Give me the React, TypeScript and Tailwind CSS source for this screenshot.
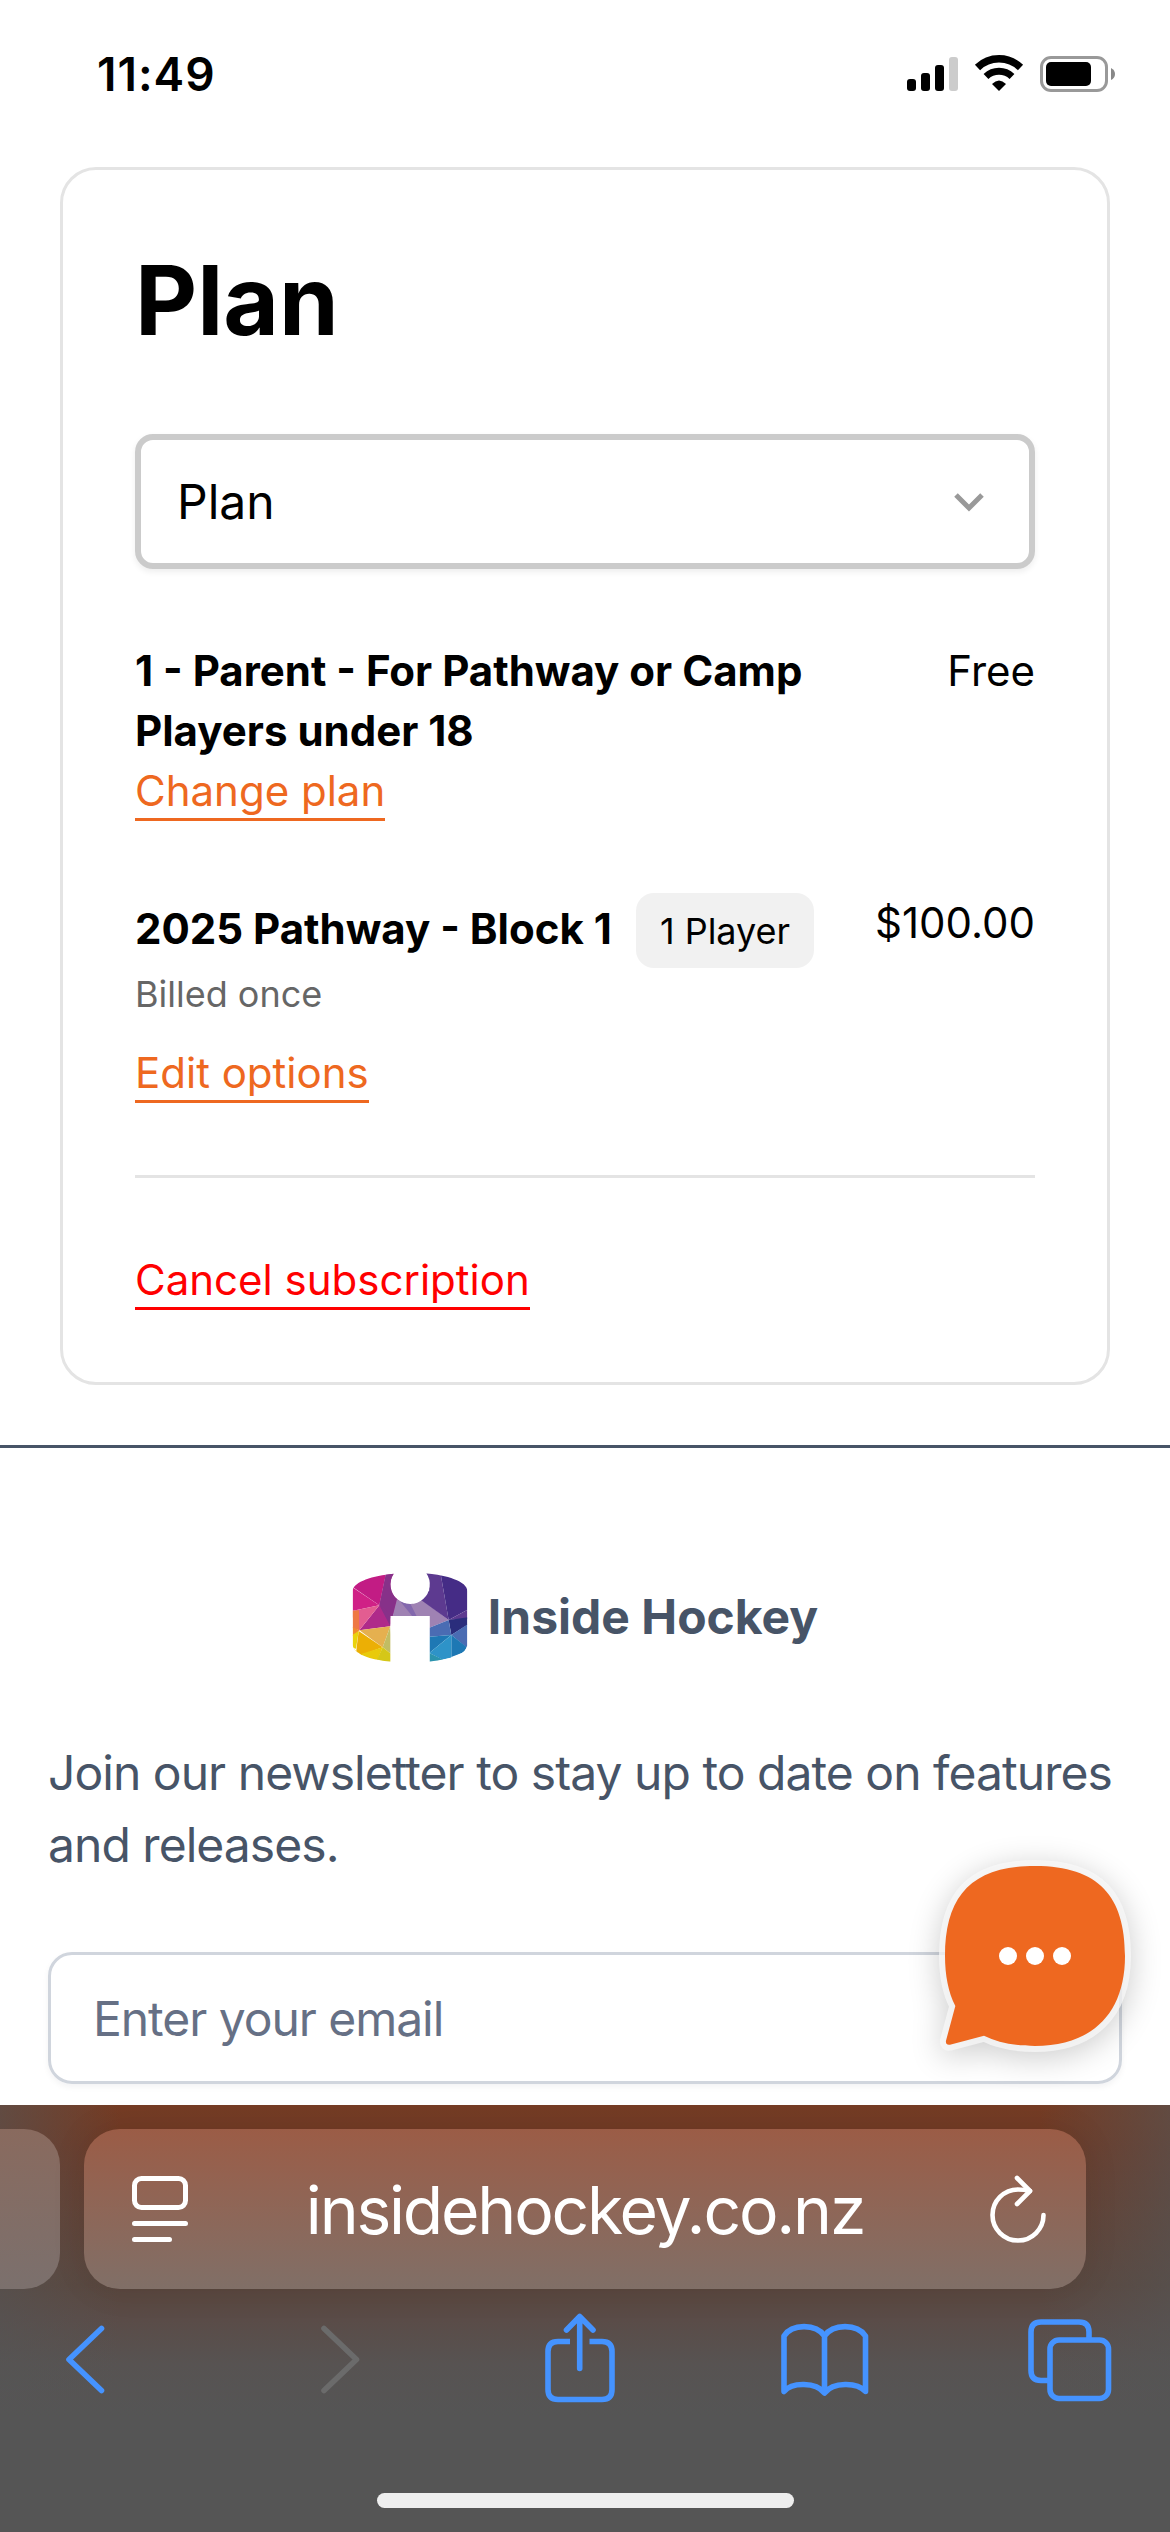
import React from 'react';

const logoFacets = [
  { points: "60,90 172,90 150,195 70,140", fill: "#c21c84" },
  { points: "60,135 150,195 60,214", fill: "#d02186" },
  { points: "172,90 215,90 215,172 190,228 183,258 90,270 150,195", fill: "#af2a8a" },
  { points: "172,90 230,90 240,184 204,172 190,228 150,195", fill: "#873189" },
  { points: "190,226 183,235 183,258 150,195", fill: "#873189" },
  { points: "60,214 150,195 90,270", fill: "#e35d91" },
  { points: "60,212 89,210 90,270 60,260", fill: "#ee7844" },
  { points: "60,255 90,270 76,285 60,290", fill: "#f08a2c" },
  { points: "60,290 88,272 80,325 60,320", fill: "#ead20c" },
  { points: "90,270 183,258 160,321", fill: "#e5b04f" },
  { points: "183,258 190,345 160,321", fill: "#c2bd62" },
  { points: "88,272 160,321 80,350 82,320", fill: "#ecaf05" },
  { points: "70,322 92,342 160,321 145,358 100,362 70,340", fill: "#e9ca0b" },
  { points: "160,321 190,345 190,375 140,365", fill: "#d5c718" },
  { points: "204,172 240,184 275,176 358,239 300,262 300,228 190,228", fill: "#9f82b3" },
  { points: "204,172 240,184 262,228 249,228", fill: "#8368ad" },
  { points: "236,182 275,176 248,190", fill: "#8368ad" },
  { points: "285,90 332,90 358,239 272,177 300,150", fill: "#5d3a90" },
  { points: "332,90 420,90 420,205 358,239", fill: "#452c86" },
  { points: "420,205 420,236 358,239", fill: "#5d3a90" },
  { points: "358,239 420,230 420,250 366,284", fill: "#2a2d7c" },
  { points: "300,262 358,239 366,284 300,289", fill: "#4a6cb3" },
  { points: "366,284 420,248 420,315 410,320", fill: "#4a6cb3" },
  { points: "300,289 366,284 300,338", fill: "#1e78b4" },
  { points: "366,284 412,320 405,335 366,350", fill: "#1e78b4" },
  { points: "300,338 366,284 366,352 340,358", fill: "#2e93c8" },
  { points: "300,338 342,358 300,368", fill: "#2b93ae" },
];

const LogoMark = () => (
  <svg className="h-[90px] w-[116px]" viewBox="68 98 348 270">
    <defs>
      <clipPath id="mark">
        <path d="M193 100 A59 59 0 1 0 291 99 C350 105 414 122 414 153 V315 C411 340 370 356 301 364 V227 H183 V364 C120 358 76 342 70 315 V150 C74 124 130 106 193 100 Z" />
      </clipPath>
    </defs>
    <g clipPath="url(#mark)">
      {logoFacets.map((facet, index) => (
        <polygon key={index} points={facet.points} fill={facet.fill} />
      ))}
    </g>
  </svg>
);

const StatusBar = () => (
  <div className="flex h-[167px] items-start justify-between pl-[97px] pr-[54px] pt-[50px]">
    <span className="text-[46px] leading-[48px] font-semibold tracking-[1px]">11:49</span>
    <svg className="mt-[4px] h-[40px] w-[210px]" viewBox="906 54 210 40">
      <rect x="907" y="79" width="9" height="12" rx="3" />
      <rect x="921" y="73" width="9" height="18" rx="3" />
      <rect x="935" y="65" width="9" height="26" rx="3" />
      <rect x="949" y="57" width="9" height="34" rx="3" fill="#cccccc" />
      <path d="M977.5 67.5 A31 31 0 0 1 1020.500 67.500" fill="none" stroke="#000" strokeWidth="7.500" />
      <path d="M986 76.500 A19 19 0 0 1 1012 76.500" fill="none" stroke="#000" strokeWidth="7" />
      <path d="M999 91 L992 84 Q999 77 1006 84 Z" />
      <rect x="1041.500" y="57.500" width="65" height="33" rx="9.500" fill="none" stroke="#999" strokeWidth="3" />
      <rect x="1046" y="62" width="45" height="24" rx="5" />
      <path d="M1111 68 Q1115 70 1115 74 Q1115 78 1111 80 Z" fill="#888" />
    </svg>
  </div>
);

const PlanCard = () => (
  <section className="mx-[60px] rounded-[36px] border-3 border-[#e4e4e4] px-[72px] pb-[72px] pt-[82px]">
    <h1 className="text-[96px] leading-[96px] font-bold">Plan</h1>
    <div className="mt-[86px] flex h-[135px] items-center justify-between rounded-[18px] border-6 border-[#cbcbcb] pl-[36px] pr-[42px] text-[48px] shadow-[0_3px_6px_rgba(0,0,0,0.07)]">
      <span>Plan</span>
      <svg className="h-[24px] w-[36px]" viewBox="0 0 36 24" fill="none" stroke="#999" strokeWidth="5">
        <path d="M5 5 L18 18 L31 5" />
      </svg>
    </div>

    <div className="mt-[72px] flex justify-between text-[42px] leading-[60px]">
      <div className="w-[700px]">
        <p className="font-bold">1 - Parent - For Pathway or Camp Players under 18</p>
        <a className="border-b-3 border-[#ee6820] pb-[2px] text-[#ee6820]">Change plan</a>
      </div>
      <span>Free</span>
    </div>

    <div className="mt-[72px] flex justify-between text-[42px] leading-[60px]">
      <div>
        <div className="flex h-[75px] items-baseline gap-[24px]">
          <p className="font-bold">2025 Pathway - Block 1</p>
          <span className="rounded-[18px] bg-[#f1f1f1] px-[24px] pt-px text-[36px] leading-[74px]">1 Player</span>
        </div>
        <p className="-mt-px text-[36px] leading-[54px] text-[#666]">Billed once</p>
        <p className="mt-[22px]">
          <a className="border-b-3 border-[#ee6820] pb-[2px] text-[#ee6820]">Edit options</a>
        </p>
      </div>
      <span>$100.00</span>
    </div>

    <hr className="my-[72px] border-t-3 border-[#e4e4e4]" />
    <p className="text-[42px] leading-[60px]">
      <a className="border-b-3 border-[#ff0000] pb-[2px] text-[#ff0000]">Cancel subscription</a>
    </p>
  </section>
);

const Footer = () => (
  <footer className="mt-[60px] border-t-3 border-[#475467] px-[48px] pt-[125px] text-[48px] text-[#475467]">
    <div className="flex h-[90px] items-center justify-center gap-[20px]">
      <LogoMark />
      <span className="mb-[2px] leading-[48px] font-bold">Inside Hockey</span>
    </div>
    <p className="mt-[74px] leading-[72px] tracking-[-0.96px]">Join our newsletter to stay up to date on features and releases.</p>
    <div className="mt-[71px] flex h-[132px] items-center rounded-[24px] border-3 border-[#d0d5dd] px-[42px] pt-[2px] tracking-[-1.05px] text-[#667085] shadow-[0_3px_6px_rgba(16,24,40,0.05)]">
      Enter your email
    </div>
  </footer>
);

const ChatButton = () => (
  <svg className="absolute left-[900px] top-[1830px] h-[270px] w-[270px] overflow-visible" viewBox="0 0 810 810">
    <defs>
      <filter id="soft" x="-30%" y="-30%" width="160%" height="160%">
        <feGaussianBlur stdDeviation="48" />
      </filter>
      <path
        id="bubble"
        d="M405 108 C597 108 675 200 675 378 C675 556 570 648 405 648 C345 648 293 637 252 617 L150 644 Q136 646 138 632 L166 528 C145 488 135 435 135 378 C135 200 213 108 405 108 Z"
      />
    </defs>
    <use href="#bubble" y="18" fill="#000" stroke="#000" strokeWidth="36" opacity="0.2" filter="url(#soft)" />
    <use href="#bubble" fill="none" stroke="#f8f8f8" strokeOpacity="0.75" strokeWidth="36" strokeLinejoin="round" />
    <use href="#bubble" fill="#ee6820" />
    <circle cx="324" cy="378" r="27" fill="#fff" />
    <circle cx="405" cy="378" r="27" fill="#fff" />
    <circle cx="486" cy="378" r="27" fill="#fff" />
  </svg>
);

const BrowserBar = () => (
  <div className="relative h-[427px] shrink-0 bg-[#555] bg-[linear-gradient(90deg,#55555599_0,#55555500_120px,#55555500_1040px,#55555599_1170px),linear-gradient(180deg,#753c24_0,#6f3a26_40px,#5a463d_180px,#5a4c48_215px,#575352_260px,#555555_310px)] pt-[24px]">
    <div className="flex h-[160px] gap-[24px]">
      <div className="w-[60px] rounded-r-[36px] bg-linear-to-b from-[#896a5e] to-[#7b706d]" />
      <div className="flex w-[1002px] items-center justify-between rounded-[36px] bg-linear-to-b from-[#9b5c46] to-[#806f67] pl-[47px] pr-[39px] text-white shadow-[0_0_36px_rgba(0,0,0,0.08)]">
        <svg className="h-[68px] w-[58px]" viewBox="131 2176 58 68" fill="none" stroke="#fff" strokeWidth="5" strokeLinecap="round">
          <rect x="134.500" y="2179.500" width="51" height="29" rx="7" />
          <path d="M134.500 2224.500 H185.500 M134.500 2240.500 H169.500" />
        </svg>
        <span className="pr-[8px] pt-[2px] text-[66px] leading-[80px] tracking-[-2.2px]">insidehockey.co.nz</span>
        <svg className="h-[70px] w-[58px]" viewBox="987 2171 58 70" fill="none" stroke="#fff" strokeWidth="4.600" strokeLinecap="round" strokeLinejoin="round">
          <path d="M1041.500 2212 A25.500 25.500 0 1 1 1016 2186.500 Q1022 2186.500 1028 2188" />
          <path d="M1015 2175 L1028 2188 L1015 2201" />
        </svg>
      </div>
    </div>
    <svg className="mt-[11px] h-[120px] w-[1170px]" viewBox="0 2300 1170 120" fill="none" stroke="#4593ff" strokeWidth="5.600" strokeLinecap="round" strokeLinejoin="round">
      <path d="M101.500 2328.500 L69 2359.500 L101.500 2390.500" />
      <path d="M324 2328.500 L356.500 2359.500 L324 2390.500" stroke="#6b6b6b" />
      <path d="M570 2341.500 H558 Q548 2341.500 548 2351.500 V2389.500 Q548 2399.500 558 2399.500 H602 Q612 2399.500 612 2389.500 V2351.500 Q612 2341.500 602 2341.500 H589.500" strokeLinecap="butt" />
      <path d="M579.700 2368.500 V2317 M566.500 2330 L579.700 2316.500 L593 2330" />
      <path d="M784 2336 C792 2323.500 816 2323.500 824.500 2336 C833 2323.500 857 2323.500 865.500 2336 V2391.500 C857 2382 833 2382 824.500 2393 C816 2382 792 2382 784 2391.500 Z M824.500 2336 V2392" />
      <path d="M1048 2380.500 H1041 Q1031 2380.500 1031 2370.500 V2332 Q1031 2322 1041 2322 H1079 Q1089 2322 1089 2332 V2338" strokeLinecap="butt" />
      <rect x="1050" y="2340" width="58.500" height="58.500" rx="9" />
    </svg>
    <div className="mx-auto mt-[73px] h-[15px] w-[417px] rounded-full bg-[#eee]" />
  </div>
);

const App = () => {
  return (
    <div className="relative flex h-[2532px] w-[1170px] flex-col overflow-hidden bg-white font-['Inter',sans-serif] text-black">
      <main className="h-[2105px] shrink-0 overflow-hidden">
        <StatusBar />
        <PlanCard />
        <Footer />
      </main>
      <ChatButton />
      <BrowserBar />
    </div>
  );
};

export default App;
